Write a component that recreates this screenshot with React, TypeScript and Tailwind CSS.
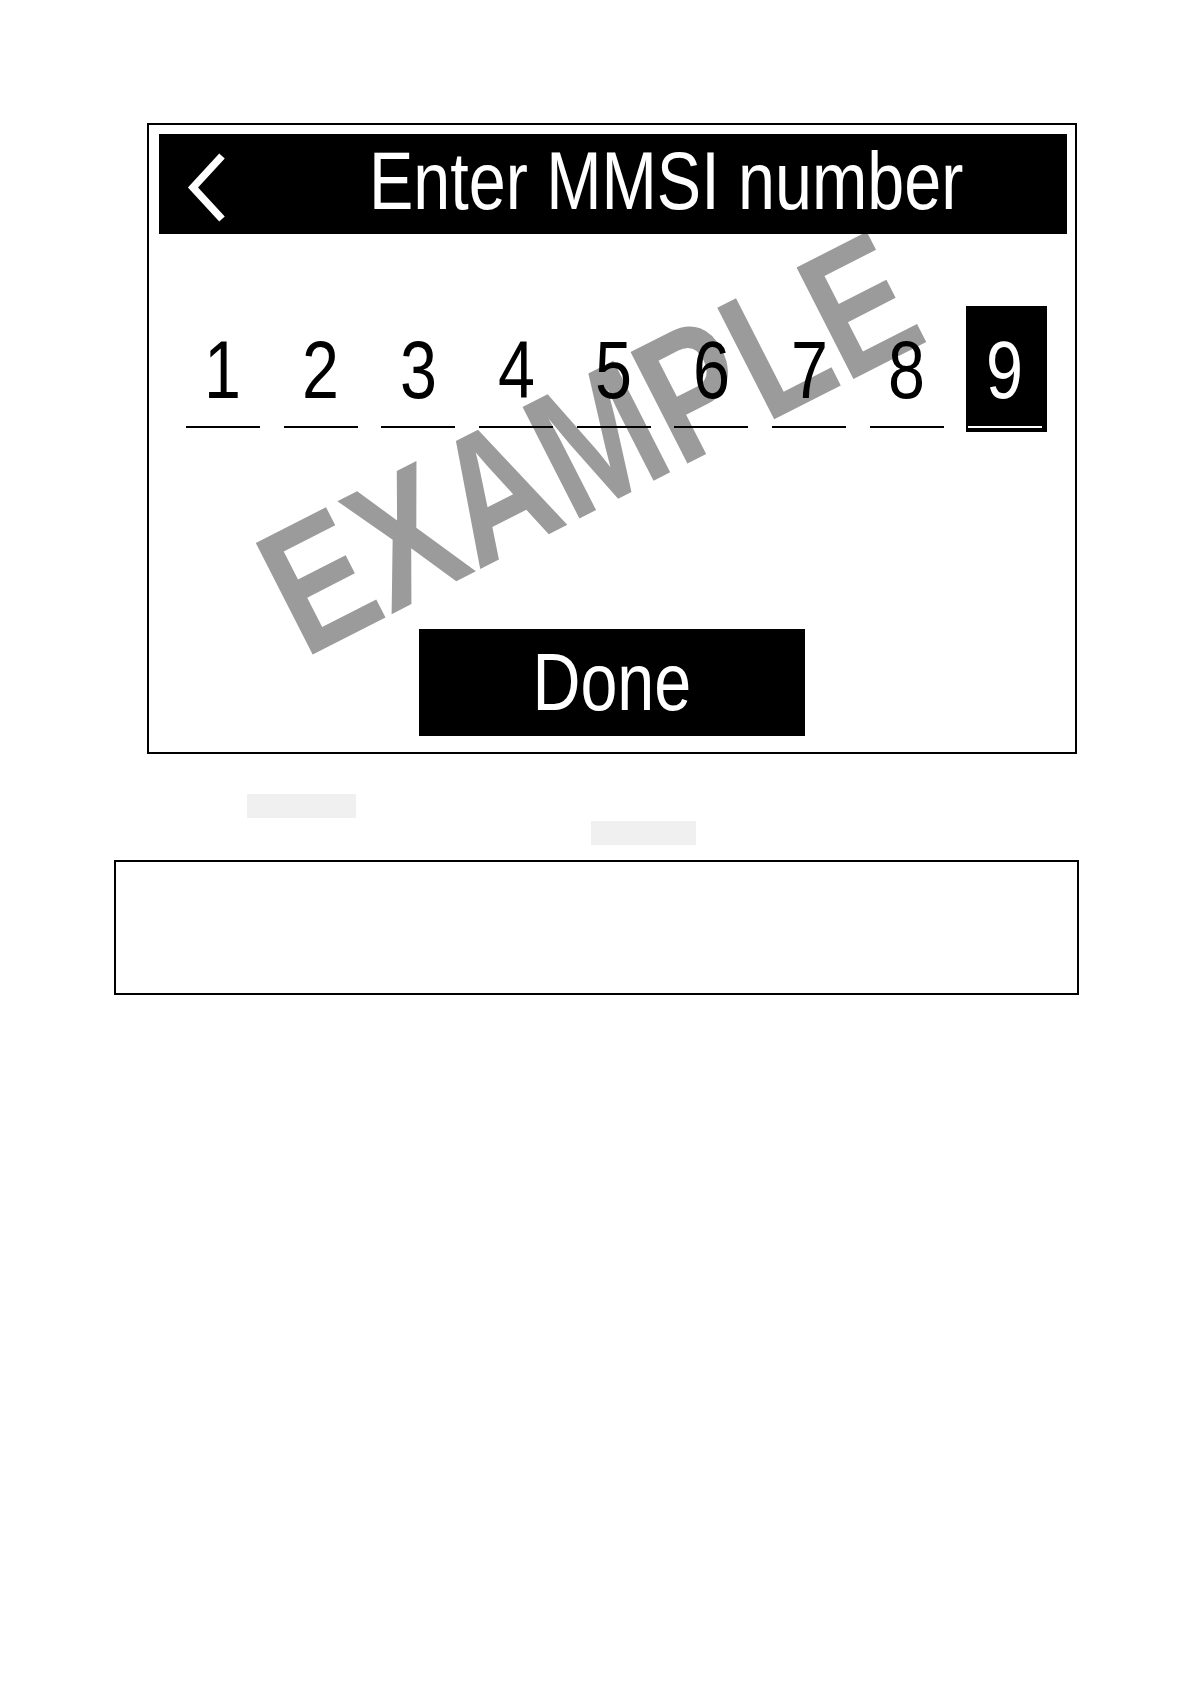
import React from "react";

const sans = "font-['Liberation_Sans','Arial',sans-serif]";

function DigitCell({ d, active }: { d: string; active?: boolean }) {
  return (
    <div className="relative w-[74px] h-[126px] flex flex-col items-center">
      {active && <div className="absolute top-0 bottom-0 left-[-2px] w-[81px] bg-black" />}
      <div
        className={`relative mt-[24px] h-[81px] leading-none text-[81px] scale-x-[0.82] ${sans} ${
          active ? "text-white" : "text-black"
        }`}
      >
        {d}
      </div>
      <div className={`relative mt-[15px] h-[1.5px] w-full ${active ? "bg-white" : "bg-black"}`} />
    </div>
  );
}

export default function App() {
  const digits = ["1", "2", "3", "4", "5", "6", "7", "8"];
  return (
    <div className="w-[1191px] min-h-[1684px] bg-white pt-[123px]">
      <div className="relative ml-[147px] w-[930px] h-[631px] border-2 border-black flex flex-col">
        {/* watermark */}
        <div
          className={`absolute left-[440px] top-[318px] -translate-x-1/2 -translate-y-1/2 rotate-[-27deg] scale-x-[0.8] whitespace-nowrap leading-none font-bold text-[182px] text-[#9b9b9b] ${sans}`}
        >
          EXAMPLE
        </div>

        <div className="relative ml-[10px] mt-[9px] w-[908px] h-[100px] bg-black flex flex-row items-start">
          <svg width="80" height="100" viewBox="0 0 80 100" className="shrink-0">
            <polyline
              points="63,22 34,53.5 63,85"
              fill="none"
              stroke="white"
              strokeWidth="7.5"
              strokeLinecap="butt"
              strokeLinejoin="miter"
            />
          </svg>
          <span
            className={`ml-[130px] mt-[7px] origin-left scale-x-[0.82] leading-none text-[81px] text-white whitespace-nowrap ${sans}`}
          >
            Enter MMSI number
          </span>
        </div>

        <div className="relative ml-[37px] mt-[72px] flex flex-row gap-[23.7px]">
          {digits.map((d) => (
            <DigitCell key={d} d={d} />
          ))}
          <DigitCell d="9" active />
        </div>

        <div className="relative ml-[270px] mt-[197px] w-[386px] h-[107px] bg-black flex items-center justify-center">
          <span className={`leading-none text-[81px] text-white scale-x-[0.82] ${sans}`}>Done</span>
        </div>
      </div>

      <div className="ml-[247px] mt-[40px] w-[109px] h-[24px] bg-[#f0f0f0]" />
      <div className="ml-[591px] mt-[3px] w-[105px] h-[24px] bg-[#f0f0f0]" />

      <div className="ml-[114px] mt-[15px] w-[965px] h-[135px] border-2 border-black" />
    </div>
  );
}
